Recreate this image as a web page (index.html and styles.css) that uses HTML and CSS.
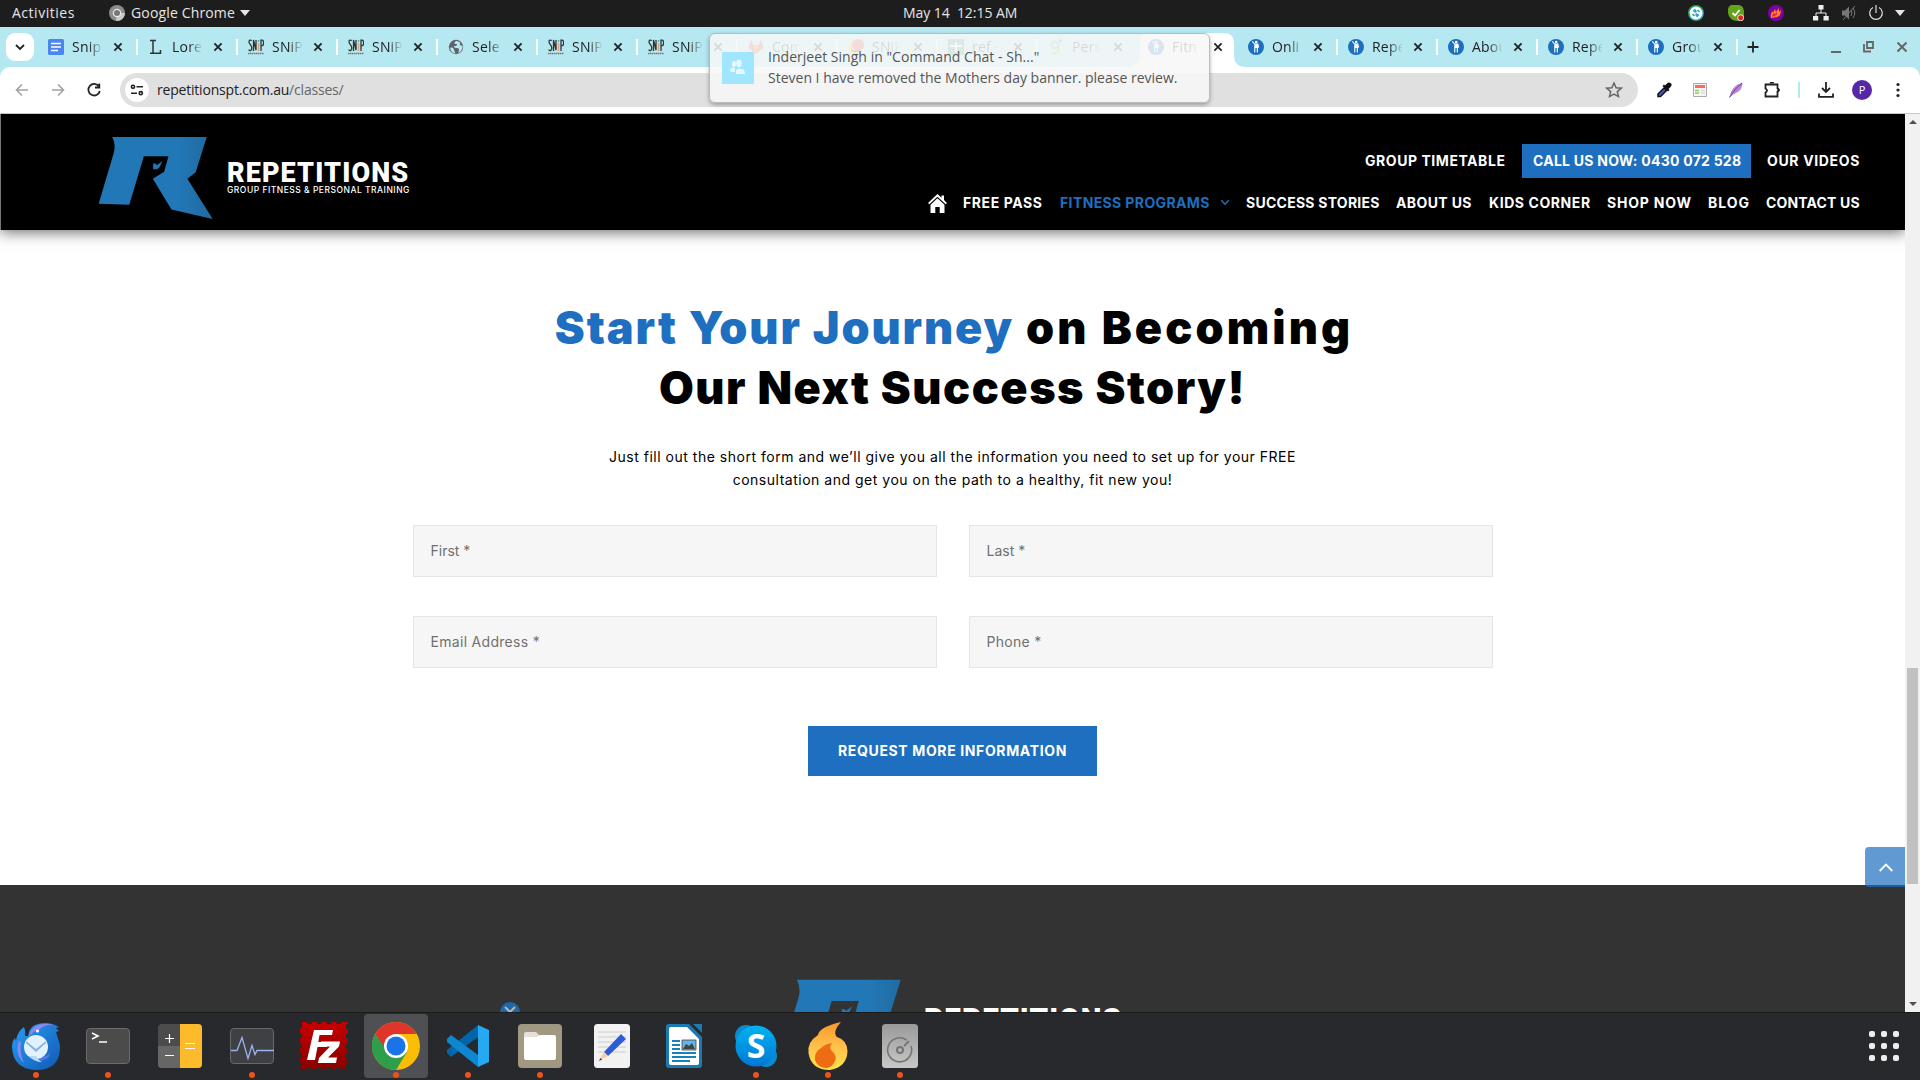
FILE: index.html
```html
<!DOCTYPE html>
<html lang="en">
<head>
<meta charset="utf-8">
<title>Fitness Programs - Repetitions</title>
<link rel="stylesheet" href="styles.css">
</head>
<body>
<svg class="defs" width="0" height="0">
  <defs>
    <linearGradient id="blueR"><stop offset="0.7" stop-color="#2277b6"/><stop offset="1" stop-color="#20699f"/></linearGradient>
    <linearGradient id="fzRed" x1="0" y1="0" x2="0" y2="1"><stop offset="0" stop-color="#c50000"/><stop offset="1" stop-color="#8a0000"/></linearGradient>
    <linearGradient id="bird" x1="0" y1="0" x2="1" y2="1"><stop offset="0" stop-color="#2a9df4"/><stop offset="1" stop-color="#1059b5"/></linearGradient>
    <linearGradient id="sky" x1="0" y1="0" x2="0" y2="1"><stop offset="0" stop-color="#00b3f0"/><stop offset="1" stop-color="#0078d7"/></linearGradient>
    <linearGradient id="flame" x1="0" y1="0" x2="0" y2="1"><stop offset="0" stop-color="#f9982c"/><stop offset=".5" stop-color="#ffc04a"/><stop offset="1" stop-color="#ffe24a"/></linearGradient>
    <linearGradient id="disk" x1="0" y1="0" x2="0" y2="1"><stop offset="0" stop-color="#9a9a9a"/><stop offset="1" stop-color="#c8c8c8"/></linearGradient>
  </defs>
  <symbol id="x" viewBox="0 0 10 10"><path d="M1.4 1.4 8.6 8.6M8.6 1.4 1.4 8.6" stroke="currentColor" stroke-width="1.8"/></symbol>
  <symbol id="f-doc" viewBox="0 0 16 16"><rect width="16" height="16" rx="1.5" fill="#4a86f0"/><path d="M3 4.5h10M3 8h10M3 11.5h7" stroke="#fff" stroke-width="1.7"/></symbol>
  <symbol id="f-l" viewBox="0 0 16 16"><path d="M2 1.500h6M2 14.300h10.500V11M5 1.500v13" stroke="#333" stroke-width="1.5" fill="none"/></symbol>
  <symbol id="f-snip" viewBox="0 0 16 16"><path d="M3.6 1.8C2.700 .6 1 1 1 3s2.800 3 2.800 6-2.300 3.300-3 1.500M5.500 12V1l2.500 10V1M13 12V1.200h1c2.200 0 2.200 5.500 0 5.500h-1" fill="none" stroke="#333" stroke-width="1.300"/><path d="M10.500 4v8" stroke="#e5a07a" stroke-width="1.400"/><path d="M10.500 1v2" stroke="#5cb0a0" stroke-width="1.400"/><path d="M0 14.500h16" stroke="#777" stroke-width="1.500" stroke-dasharray="1.500 .5"/></symbol>
  <symbol id="f-globe" viewBox="0 0 16 16"><circle cx="8" cy="8" r="7.200" fill="#5f6368"/><path d="M2 9c2-1 4 0 4 2l1.500 3.500Q3 14 2 9zM8 2c-2 1-2 3 0 3s1 2-1 2-1 2 2 2 2 3 1 5c3-1 5-4 4.500-7L12 6V3.500Q10 1.500 8 2z" fill="#b5e8f1"/></symbol>
  <symbol id="f-gitlab" viewBox="0 0 16 16"><path d="M8 15 .5 9 3 1l2.500 5h5L13 1l2.500 8z" fill="#e24329"/><path d="m8 15-3-9h6z" fill="#fc6d26"/></symbol>
  <symbol id="f-ball" viewBox="0 0 16 16"><circle cx="7" cy="9" r="6.500" fill="#f0b429"/><circle cx="10" cy="6" r="6" fill="#e5392c"/><path d="M3 11c3 2 6 2 8 0" stroke="#222" stroke-width="1.500" fill="none"/></symbol>
  <symbol id="f-sheet" viewBox="0 0 16 16"><rect width="16" height="16" rx="1.500" fill="#23a566"/><path d="M8 3v10M2 7h12" stroke="#fff" stroke-width="2"/></symbol>
  <symbol id="f-g" viewBox="0 0 16 16"><circle cx="7" cy="6" r="3.300" fill="none" stroke="#6fd66f" stroke-width="2.400"/><path d="M10.500 3v8c0 4-5 4.500-7 2" fill="none" stroke="#6fd66f" stroke-width="2.400"/><circle cx="12" cy="1.800" r="1.500" fill="#8a4ff0"/></symbol>
  <symbol id="f-rep" viewBox="0 0 16 16"><circle cx="8" cy="8" r="8" fill="#1c6fbd"/><path d="M4.300 2.300 6.600 5M6.600 5h3.200l.9 3.600M7 5.200 6.700 13.500M9.300 5.200v8.300" fill="none" stroke="#fff" stroke-width="1.100"/><path d="M6.800 5h2.800v4H6.600z" fill="#fff"/><circle cx="8.200" cy="3" r="1.300" fill="#fff"/></symbol>
  <symbol id="logo" viewBox="50 45 355 260"><path d="M96 50H380L347 156 322 176 398 297 274 268 218 176 252 155 265 108H191L147 254 55 251 100 100Q108 75 96 50Z" fill="url(#blueR)"/><path d="m219 130 8 1 3 4 17-13-9 19-7 6h-12z" fill="#2277b6"/></symbol>
</svg>

<header class="topbar">
  <span class="t-act">Activities</span>
  <svg class="t-chrome" width="16" height="16" viewBox="0 0 16 16"><circle cx="8" cy="8" r="8" fill="#8c8c8c"/><path d="M8 8h8a8 8 0 0 1-9 7.900z" fill="#c9c9c9"/><circle cx="8" cy="8" r="4.300" fill="#e8e8e8"/><circle cx="8" cy="8" r="3" fill="#777"/></svg>
  <span class="t-app">Google Chrome</span>
  <i class="caret"></i>
  <span class="clock">May 14&nbsp; 12:15 AM</span>
  <div class="tray">
    <svg width="16" height="16" viewBox="0 0 16 16"><circle cx="8" cy="8" r="8" fill="#2aa05c"/><path d="M1 11a8 8 0 0 0 14 0V5z" fill="#3fa9e8"/><circle cx="8" cy="8" r="6.400" fill="#fff"/><path d="m4.500 6 2.500-2.500 2 3-1.500 1.500zM11.500 10 9 12.500l-2-3L8.500 8z" fill="#2a9df4"/><path d="m4.500 9 2 2M9.500 5l2 2" stroke="#2aa05c" stroke-width="1.500"/></svg>
    <svg width="16" height="16" viewBox="0 0 16 16"><path d="M4 0h7q5 1 5 7v5q-2 4-7 4-8-1-9-8V4q1-4 4-4z" fill="#62a31a"/><path d="m4.500 8 2.500 2.500L11.500 5" fill="none" stroke="#fff" stroke-width="1.800"/><circle cx="12.700" cy="12.800" r="3" fill="#e02020" stroke="#fff" stroke-width=".8"/></svg>
    <svg width="16" height="16" viewBox="0 0 16 16"><circle cx="8" cy="8" r="8" fill="#8000a8"/><path d="M3 13q-1-5 2-7v2l2-4 1 3 3-4v4l2-2q0 6-4 7z" fill="#ff8a1e"/><path d="M4 12q0-3 2-4l1 1 2-2v3z" fill="#e8205a"/></svg>
    <svg class="t-net" width="16" height="16" viewBox="0 0 16 16"><path d="M8 4v4M3 11V8h10v3" stroke="#eee" fill="none"/><path d="M5.500 0h5v4.500h-5zM0 11h5.200v4.500H0zM10.500 11h5.200v4.500h-5.200z" fill="#eee"/></svg>
    <svg class="t-vol" width="16" height="16" viewBox="0 0 16 16"><path d="M1 5.500h3l4-4v13l-4-4H1z" fill="#777"/><path d="M10 5q2 3 0 6M12 3q3.500 5 0 10M2 15 14 1" fill="none" stroke="#777"/></svg>
    <svg class="t-pow" width="16" height="16" viewBox="0 0 16 16"><path d="M5 2.500a6.300 6.300 0 1 0 6 0M8 0v8" fill="none" stroke="#ddd" stroke-width="1.200"/></svg>
    <i class="caret t-last"></i>
  </div>
</header>

<nav class="tabs">
  <span class="tabmenu"><svg width="10" height="8" viewBox="0 0 10 8"><path d="m1 2 4 4 4-4" fill="none" stroke="#222" stroke-width="1.800"/></svg></span>
  <div class="tab"><svg class="fav"><use href="#f-doc"/></svg><span class="tt">Snip</span><svg class="cl"><use href="#x"/></svg></div>
  <div class="tab"><svg class="fav"><use href="#f-l"/></svg><span class="tt">Lore</span><svg class="cl"><use href="#x"/></svg></div>
  <div class="tab"><svg class="fav"><use href="#f-snip"/></svg><span class="tt">SNiP</span><svg class="cl"><use href="#x"/></svg></div>
  <div class="tab"><svg class="fav"><use href="#f-snip"/></svg><span class="tt">SNiP</span><svg class="cl"><use href="#x"/></svg></div>
  <div class="tab"><svg class="fav"><use href="#f-globe"/></svg><span class="tt">Sele</span><svg class="cl"><use href="#x"/></svg></div>
  <div class="tab"><svg class="fav"><use href="#f-snip"/></svg><span class="tt">SNiP</span><svg class="cl"><use href="#x"/></svg></div>
  <div class="tab"><svg class="fav"><use href="#f-snip"/></svg><span class="tt">SNiP</span><svg class="cl"><use href="#x"/></svg></div>
  <div class="tab"><svg class="fav"><use href="#f-gitlab"/></svg><span class="tt">Com</span><svg class="cl"><use href="#x"/></svg></div>
  <div class="tab"><svg class="fav"><use href="#f-ball"/></svg><span class="tt">SNiP</span><svg class="cl"><use href="#x"/></svg></div>
  <div class="tab"><svg class="fav"><use href="#f-sheet"/></svg><span class="tt">ref -</span><svg class="cl"><use href="#x"/></svg></div>
  <div class="tab nosep"><svg class="fav"><use href="#f-g"/></svg><span class="tt">Pers</span><svg class="cl"><use href="#x"/></svg></div>
  <div class="tab nosep active"><svg class="shape" width="118" height="34" viewBox="0 0 118 34"><path d="M0 34q12 0 12-12V10Q12 0 22 0H96q10 0 10 10V22q0 12 12 12z" fill="#fff"/></svg><svg class="fav"><use href="#f-rep"/></svg><span class="tt">Fitn</span><svg class="cl"><use href="#x"/></svg></div>
  <div class="tab"><svg class="fav"><use href="#f-rep"/></svg><span class="tt">Onli</span><svg class="cl"><use href="#x"/></svg></div>
  <div class="tab"><svg class="fav"><use href="#f-rep"/></svg><span class="tt">Repe</span><svg class="cl"><use href="#x"/></svg></div>
  <div class="tab"><svg class="fav"><use href="#f-rep"/></svg><span class="tt">Abou</span><svg class="cl"><use href="#x"/></svg></div>
  <div class="tab"><svg class="fav"><use href="#f-rep"/></svg><span class="tt">Repe</span><svg class="cl"><use href="#x"/></svg></div>
  <div class="tab"><svg class="fav"><use href="#f-rep"/></svg><span class="tt">Grou</span><svg class="cl"><use href="#x"/></svg></div>
  <svg class="plus" width="12" height="12" viewBox="0 0 12 12"><path d="M6 .5v11M.5 6h11" stroke="#222" stroke-width="1.800"/></svg>
  <div class="winctl">
    <svg width="12" height="12" viewBox="0 0 12 12"><path d="M1 11h10" stroke="#666" stroke-width="2"/></svg>
    <svg width="12" height="12" viewBox="0 0 12 12"><path d="M4 1h6v6H4zM1 3v7.500h7" fill="none" stroke="#666" stroke-width="1.800"/></svg>
    <svg width="12" height="12" viewBox="0 0 12 12"><path d="m1.500 1.500 9 9m0-9-9 9" stroke="#666" stroke-width="2"/></svg>
  </div>
</nav>

<div class="toolwrap"><div class="toolbar">
  <svg class="ic" viewBox="0 0 16 16"><path d="M14 8H3M8 2.500 2.500 8 8 13.500" fill="none" stroke="#a2a2a2" stroke-width="1.600"/></svg>
  <svg class="ic" viewBox="0 0 16 16"><path d="M2 8h11M8 2.500 13.500 8 8 13.500" fill="none" stroke="#a2a2a2" stroke-width="1.600"/></svg>
  <svg class="ic" viewBox="0 0 16 16"><path d="M13 4.500A5.800 5.800 0 1 0 13.800 9M13.300 1.500v4H9" fill="none" stroke="#222" stroke-width="1.800"/></svg>
  <div class="omni">
    <span class="site"><svg width="14" height="12" viewBox="0 0 14 12"><g fill="none" stroke="#222" stroke-width="1.600"><circle cx="3" cy="2.800" r="1.600"/><path d="M6.500 2.800H13M1 9.200h6"/><circle cx="10.800" cy="9.200" r="1.600"/></g></svg></span>
    <span class="url">repetitionspt.com.au<em>/classes/</em></span>
    <svg class="star" width="18" height="18" viewBox="0 0 18 18"><path d="m9 2 2.100 4.700 5.100.5-3.900 3.400 1.200 5L9 13l-4.500 2.600 1.200-5L1.800 7.200l5.100-.5z" fill="none" stroke="#666" stroke-width="1.500"/></svg>
  </div>
  <div class="exts">
    <svg class="ic" viewBox="0 0 16 16"><path d="M2 14.500V12l6-6 2.500 2.500-6 6z" fill="#4b56c9" stroke="#111" stroke-width="1.500"/><path d="m6.500 4 5.500 5.500 1.500-1.500-1-1L15 4.500Q16.500 2 14.500 1T11 1.500L9 3.500l-1-1z" fill="#111"/></svg>
    <svg class="ic" viewBox="0 0 16 16"><path d="M1.500 1.500h13v13h-13z" fill="#f6f6f6" stroke="#aaa"/><path d="M3 3h10v3H3z" fill="#f66"/><path d="M3 8.500h4M3 11h4" stroke="#8fce5a" stroke-width="1.500"/><path d="M9 8.500h4M9 11h4" stroke="#ddd" stroke-width="1.500"/></svg>
    <svg class="ic" viewBox="0 0 16 16"><path d="M1.500 15.500Q3 4 14.500.5 15 9 5 12.500z" fill="#b982d6"/><path d="M1.500 15.500Q6 7 14 1" stroke="#7a3a9c" fill="none"/></svg>
    <svg class="ic" viewBox="0 0 16 16"><path d="M1.500 2.500h12v4q2.500 1.500 0 3v5h-12v-4q3-2 0-4z" fill="none" stroke="#222" stroke-width="1.800"/><path d="M6 1.500a1.800 1.800 0 0 1 3.600 0M13.500 6.300a1.800 1.800 0 0 1 0 3.600" fill="#222" stroke="#222"/></svg>
    <i class="vsep"></i>
    <svg class="ic" viewBox="0 0 16 16"><path d="M8 0v9.500M4 6l4 4 4-4M1 11.500v3.300h14v-3.300" fill="none" stroke="#222" stroke-width="1.800"/></svg>
    <span class="avatar">P</span>
    <svg class="ic" viewBox="0 0 16 16"><g fill="#222"><circle cx="8" cy="2.500" r="1.600"/><circle cx="8" cy="8" r="1.600"/><circle cx="8" cy="13.500" r="1.600"/></g></svg>
  </div>
</div></div>

<div class="viewport">
  <main class="page">
    <div class="sitehead">
      <div class="brand">
        <svg class="mark"><use href="#logo"/></svg>
        <div class="words"><b>REPETITIONS</b><small>GROUP FITNESS &amp; PERSONAL TRAINING</small></div>
      </div>
      <div class="menus">
        <div class="menu first"><a class="n1">GROUP TIMETABLE</a><a class="call">CALL US NOW: 0430 072 528</a><a class="n2">OUR VIDEOS</a></div>
        <div class="menu">
          <svg class="home" width="19" height="19" viewBox="0 0 19 19"><path d="M9.500 0 0 9l1.300 1.300 8.200-7.600 8.200 7.600L19 9l-3-2.900V1.500h-2.500v2.300z" fill="#fff"/><path d="m9.500 4.300-7 6.500V19h4.800v-6h4.400v6h4.800v-8.200z" fill="#fff"/></svg>
          <a class="n3">FREE PASS</a><a class="n4 on">FITNESS PROGRAMS<svg width="10" height="7" viewBox="0 0 10 7"><path d="m1.200 1.200 3.800 4 3.800-4" fill="none" stroke="#1e6fbf" stroke-width="1.500"/></svg></a><a class="n5">SUCCESS STORIES</a><a class="n6">ABOUT US</a><a class="n7">KIDS CORNER</a><a class="n8">SHOP NOW</a><a class="n9">BLOG</a><a class="n10">CONTACT US</a>
        </div>
      </div>
    </div>
    <section class="signup">
      <h1><span class="h-a">Start Your Journey</span><span class="h-b">on Becoming</span><br><span class="h-c">Our Next Success Story!</span></h1>
      <p>Just fill out the short form and we’ll give you all the information you need to set up for your FREE<br>consultation and get you on the path to a healthy, fit new you!</p>
      <form class="fields">
        <div class="field short">First *</div><div class="field short">Last *</div>
        <div class="field">Email Address *</div><div class="field">Phone *</div>
      </form>
      <div class="submit">REQUEST MORE INFORMATION</div>
    </section>
    <footer class="foot">
      <svg class="bubble" width="20" height="20" viewBox="0 0 20 20"><circle cx="10" cy="10" r="10" fill="#2266a8"/><path d="m5 5 10 10M15 5 5 15" stroke="#b8b8b8" stroke-width="2"/></svg>
      <div class="brand big"><svg class="mark"><use href="#logo"/></svg><div class="words"><b>REPETITIONS</b></div></div>
    </footer>
    <div class="totop"><svg width="14" height="9" viewBox="0 0 14 9"><path d="m.7 8 6.300-6.500L13.300 8" fill="none" stroke="#fff" stroke-width="1.800"/></svg></div>
  </main>
  <div class="scroll"><i class="up"></i><i class="thumb"></i><i class="down"></i></div>
</div>

<div class="dock">
  <span class="app run"><svg viewBox="0 0 48 48"><path d="M23 3q10-4 20 0l4 2-3 1 3 3-3 1 4 13q1 25-24 25Q1 47 0 25q0-6 3-9l1 3q1-9 8-14 2 5 1 9l3 0Q17 6 23 3z" fill="url(#bird)"/><path d="M17 14Q20-1 42 2.500 31 2.500 27 8l-5 2z" fill="#8f86ee"/><path d="M7 19q-5 13 5 22Q7 31 9 20z" fill="#7f8cf5"/><path d="M25 39q12 0 13-8-4 4-9 4z" fill="#4a7be8"/><circle cx="24" cy="25" r="12" fill="#e2f1fe"/><path d="m14 19 10 8 10-8v2l-10 9-10-9z" fill="#86b4e0"/><path d="M17 34q5 6 13 6-4-2-6-6z" fill="#b8d8f5"/><circle cx="25.500" cy="9" r="1.500" fill="#fff"/></svg></span>
  <span class="app run"><svg viewBox="0 0 48 48"><rect x="2.500" y="6.500" width="43" height="35" rx="3.500" fill="#4b4b4b" stroke="#6b6b6b"/><path d="m8 11 6 3-6 3M15 20h8" fill="none" stroke="#fff" stroke-width="1.600"/></svg></span>
  <span class="app"><svg viewBox="0 0 48 48"><rect x="2" y="2" width="44" height="44" rx="4" fill="#4c4c4c"/><path d="M2 24h22v22H6q-4 0-4-4z" fill="#666"/><path d="M24 2h18q4 0 4 4v36q0 4-4 4H24z" fill="#fdbb2b"/><path d="M13.500 12v9M9 16.500h9M9 33.500h9M29 21.500h10M29 26.500h10" stroke="#fff" stroke-width="1.200"/></svg></span>
  <span class="app run"><svg viewBox="0 0 48 48"><rect x="2.500" y="6.500" width="43" height="35" rx="3.500" fill="#3f4043" stroke="#686868"/><path d="M3 28.500h6l5-13 6 21 4-13 3 9 2-4h17" fill="none" stroke="#9db0f0" stroke-width="1.300"/></svg></span>
  <span class="app"><svg viewBox="0 0 48 48"><rect x="2" y="2" width="44" height="44" fill="url(#fzRed)" stroke="url(#fzRed)" stroke-width="4" stroke-dasharray="5 4.800"/><path d="M14 8h19l-1 5H19.500l-1.200 7H28l-1 5h-9.500L15 38H7z" fill="#fff"/><path d="M21 19.500h19l-1 5-11 11h9l-1 5.500H18l1-5 11-11.500H20z" fill="#fff"/></svg></span>
  <span class="app run sel"><svg viewBox="0 0 48 48"><circle cx="24" cy="24" r="24" fill="#fbbc04"/><path d="M3.200 12A24 24 0 0 1 44.800 12H24l-10 18z" fill="#e0352b"/><path d="M3.200 12A24 24 0 0 0 24 48l11-18-20-1z" fill="#2e9e4a"/><circle cx="24" cy="24" r="12" fill="#fff"/><circle cx="24" cy="24" r="9.500" fill="#1a73e8"/></svg></span>
  <span class="app run"><svg viewBox="0 0 48 48"><path d="m34 3 11 5v32l-11 5z" fill="#24a9f2"/><path d="M34 3v12L7 35l-4-4v-3z" fill="#0065a9"/><path d="M34 45V33L7 13l-4 4v3z" fill="#0f86d0"/></svg></span>
  <span class="app run"><svg viewBox="0 0 48 48"><rect x="2" y="2" width="44" height="44" rx="4" fill="#a19882"/><path d="M8 12q0-2 2-2h10l4 4v5H8z" fill="#e6e1d8"/><path d="M8 17q0-2 2-2h11l3-2h14q2 0 2 2v21q0 2-2 2H10q-2 0-2-2z" fill="#fff"/></svg></span>
  <span class="app"><svg viewBox="0 0 48 48"><rect x="6" y="2" width="36" height="44" rx="3.500" fill="#f2f2f2"/><path d="M10 10h28M10 15h28M10 20h28M10 25h28M10 30h28" stroke="#ccc"/><path d="m16 30 17-18 5 5-18 17z" fill="#2b5bd7"/><path d="m16 30-5 9 9-5z" fill="#f5cfa8"/><path d="m12.500 36-1.500 3 3-1.500z" fill="#333"/></svg></span>
  <span class="app"><svg viewBox="0 0 48 48"><path d="M9 2h20l13 13v28q0 3-3 3H9q-3 0-3-3V5q0-3 3-3z" fill="#1c7ab0"/><path d="M33 2h9v9z" fill="#1c7ab0"/><path d="M11 5h16l12 12v24q0 2-2 2H11q-2 0-2-2V7q0-2 2-2z" fill="#fff"/><path d="M12 19h8M12 23h8M12 27h8M12 31h24M12 35h24M12 39h18" stroke="#1683bd" stroke-width="2"/><path d="M22 18h14v10H22z" fill="#62b5e6" stroke="#444" stroke-width=".8"/><path d="m23 27 3-5 3 2 3-3 3 6z" fill="#444"/></svg></span>
  <span class="app run"><svg viewBox="0 0 48 48"><circle cx="14" cy="14" r="11" fill="#0a8bcb"/><circle cx="34" cy="34" r="11" fill="#0a8bcb"/><circle cx="24" cy="24" r="20.500" fill="url(#sky)"/><text x="24" y="36" class="s">S</text></svg></span>
  <span class="app run"><svg viewBox="0 0 48 48"><path d="M37 0Q28 10 33 15 43 18 43.500 29 43 45 26 48 7 48 4.500 31 3 20 14 13 15 5 37 0z" fill="url(#flame)"/><path d="M28 21q-4 6 1 9 4 4 2 9-3 7-9 7-9-1-11-8-1-8 6-12 4-4 11-5z" fill="#ee6c14"/></svg></span>
  <span class="app run"><svg viewBox="0 0 48 48"><rect x="6" y="2" width="36" height="44" rx="3.500" fill="url(#disk)"/><path d="M30.500 18a12 12 0 1 0 4.500 6" fill="none" stroke="#757575" stroke-width="1.600"/><circle cx="24" cy="28" r="3" fill="none" stroke="#757575" stroke-width="2"/><path d="m28 24 5-5" stroke="#757575" stroke-width="1.800"/></svg></span>
  <div class="grid"><i></i><i></i><i></i><i></i><i></i><i></i><i></i><i></i><i></i></div>
</div>

<div class="toast">
  <span class="pic"><svg width="16" height="18" viewBox="0 0 16 18"><g fill="#fff" opacity=".75"><ellipse cx="4" cy="5" rx="2" ry="3"/><ellipse cx="9" cy="4.500" rx="2.800" ry="3.800"/><path d="M0 12q0-4 5-3-1 2 0 4H1zM6 15q-1-6 5-5 4 0 4 5z"/></g></svg></span>
  <div class="msg"><div class="m1">Inderjeet Singh in "Command Chat - Sh..."</div><div>Steven I have removed the Mothers day banner. please review.</div></div>
</div>
</body>
</html>
```

FILE: styles.css
```css
* { box-sizing: border-box; }
body { margin: 0; width: 1920px; height: 1080px; overflow: hidden; display: flex; flex-direction: column; position: relative; background: #fff; font-family: "Open Sans", sans-serif; font-size: 14px; }
svg { display: block; flex: none; }
.defs { position: absolute; }

/* desktop top bar */
.topbar { height: 27px; flex: none; background: #1d1d1d; color: #e6e6e6; display: flex; align-items: center; padding-left: 12px; position: relative; line-height: 26px; padding-bottom: 1px; }
.t-act { letter-spacing: .52px; width: 97px; }
.t-chrome { margin-right: 6px; }
.t-app { letter-spacing: .15px; width: 109px; }
.caret { border: 5px solid transparent; border-top: 6px solid #e6e6e6; border-bottom: 0; }
.clock { position: absolute; left: 903px; letter-spacing: -.05px; }
.tray { margin-left: auto; display: flex; align-items: center; padding-right: 15px; }
.tray svg { margin-right: 24px; }
.tray .t-net { margin: 0 12px 0 5px; }
.tray .t-vol { margin-right: 11px; }
.tray .t-pow { margin-right: 11px; }

/* tab strip */
.tabs { height: 40px; flex: none; background: #b5e8f1; display: flex; align-items: center; padding-left: 6px; }
.tabmenu { width: 28px; height: 28px; border-radius: 9px; background: #fff; margin-right: 4px; display: flex; align-items: center; justify-content: center; }
.tab { width: 100px; height: 40px; flex: none; display: flex; align-items: center; padding-left: 10px; color: #222; position: relative; }
.tab::after { content: ""; width: 2px; height: 16px; background: #fff; margin-left: auto; }
.tab.nosep::after { background: transparent; }
.fav { width: 16px; height: 16px; margin-right: 8px; }
.tt { width: 30px; overflow: hidden; white-space: nowrap; letter-spacing: .2px; padding-bottom: 2px; -webkit-mask-image: linear-gradient(90deg, #000 55%, rgba(0,0,0,.05)); mask-image: linear-gradient(90deg, #000 55%, rgba(0,0,0,.05)); }
.cl { width: 10px; height: 10px; margin-left: 11px; }
.shape { position: absolute; left: -10px; top: 6px; }
.active .fav, .active .tt, .active .cl { position: relative; }
.plus { margin-left: 9px; }
.winctl { margin-left: auto; padding-right: 12px; display: flex; gap: 21px; }

/* toolbar */
.toolwrap { flex: none; background: #b5e8f1; }
.toolbar { height: 47px; background: #fff; border-radius: 10px 10px 0 0; border-bottom: 1px solid #c8c8c8; display: flex; align-items: center; padding-left: 14px; }
.ic { width: 16px; height: 16px; margin-right: 20px; }
.toolbar > .ic:nth-child(3) { margin-right: 18px; }
.omni { width: 1518px; height: 34px; background: #e0e0e0; border-radius: 17px; display: flex; align-items: center; padding: 0 15px 0 5px; }
.site { width: 24px; height: 24px; border-radius: 50%; background: #fff; display: flex; align-items: center; justify-content: center; margin-right: 8px; }
.url { color: #222; letter-spacing: -.2px; padding-bottom: 1px; }
.url em { font-style: normal; color: #666; }
.star { margin-left: auto; }
.exts { display: flex; align-items: center; padding-left: 18px; }
.exts .ic:nth-child(4) { margin-right: 18px; }
.vsep { width: 2px; height: 16px; background: #b5e8f1; margin-right: 18px; }
.exts .vsep + .ic { margin-right: 18px; }
.avatar { width: 20px; height: 20px; border-radius: 50%; background: #5526a5; color: #fff; font-size: 11px; line-height: 20px; text-align: center; margin-right: 18px; }
.exts .ic:last-child { margin-right: 0; }

/* page */
.viewport { flex: 1; display: flex; min-height: 0; }
.page { width: 1905px; overflow: hidden; position: relative; font-family: Inter, sans-serif; }
.sitehead { height: 116px; background: #000; border-left: 1px solid #777; box-shadow: 0 2px 14px rgba(0,0,0,.6); display: flex; justify-content: space-between; position: relative; padding: 0 45px 0 96px; }
.brand { display: flex; }
.mark { width: 118px; height: 87px; margin-top: 21px; }
.words { color: #fff; display: flex; flex-direction: column; margin: 49px 0 0 12px; }
.words b { font: 900 27px/20px Roboto, sans-serif; letter-spacing: 1.1px; }
.words small { font-size: 8.500px; line-height: 11px; font-weight: 500; letter-spacing: .5px; margin-top: 2px; }
.menus { display: flex; flex-direction: column; align-items: flex-end; padding-top: 30px; gap: 8px; }
.menu { display: flex; align-items: center; gap: 16px; height: 34px; color: #fff; font-size: 14px; line-height: 17px; font-weight: 700; white-space: nowrap; }
.menu a { padding-bottom: 1px; }
.menu .call { background: #1e6fbf; width: 229px; height: 34px; line-height: 34px; padding: 0 0 0 11px; letter-spacing: .24px; }
.n1 { letter-spacing: .55px; width: 141px; }
.n2 { letter-spacing: .65px; width: 93px; }
.n3 { letter-spacing: .6px; width: 81px; }
.n4 { letter-spacing: .38px; display: flex; align-items: center; justify-content: space-between; width: 170px; }
.n5 { letter-spacing: .25px; width: 134px; }
.n6 { letter-spacing: .38px; width: 77px; }
.n7 { letter-spacing: .58px; width: 102px; }
.n8 { letter-spacing: .8px; width: 85px; }
.n9 { letter-spacing: .95px; width: 42px; }
.n10 { letter-spacing: .15px; width: 94px; }
.on { color: #1e6fbf; }

.signup { height: 655px; padding-top: 68px; display: flex; flex-direction: column; align-items: center; text-align: center; }
h1 { margin: 0 0 27px; font-size: 45px; line-height: 60px; font-weight: 900; color: #000; white-space: nowrap; }
.h-a { color: #1e6fbf; letter-spacing: 1.9px; margin-right: 12px; }
.h-b { letter-spacing: 3.1px; margin-right: -3px; }
.h-c { letter-spacing: 1.5px; }
.signup p { margin: 0 0 34px; line-height: 23px; font-weight: 400; letter-spacing: .51px; color: #000; }
.fields { width: 1080px; display: grid; grid-template-columns: 1fr 1fr; gap: 39px 32px; margin: 0 0 58px; }
.field { height: 52px; background: #f6f6f6; border: 1px solid #e5e5e5; padding-left: 17px; line-height: 50px; text-align: left; color: #707070; letter-spacing: .3px; }
.short { letter-spacing: 0; }
.submit { width: 289px; height: 50px; line-height: 50px; background: #1e6fbf; color: #fff; font-weight: 700; letter-spacing: .63px; }

.foot { height: 127px; background: #333; overflow: hidden; display: flex; }
.bubble { margin: 117px 0 0 500px; }
.big { margin-left: 260px; }
.big .mark { width: 130px; height: 95px; margin-top: 93px; }
.big .words { margin: 124px 0 0 14px; }
.big .words b { font-size: 29.5px; line-height: 21px; letter-spacing: 1.1px; }
.totop { position: absolute; right: 0; top: 733px; width: 40px; height: 40px; background: rgba(30,111,191,.7); border-radius: 4px 0 0 4px; display: flex; align-items: center; justify-content: center; padding-left: 2px; }

.scroll { width: 15px; background: #f1f1f1; display: flex; flex-direction: column; align-items: center; }
.scroll i { border: 4px solid transparent; }
.scroll .up { border-top: 0; border-bottom-color: #505050; margin-top: 6px; }
.scroll .thumb { border: 0; width: 11px; height: 216px; background: #c1c1c1; margin-top: 544px; }
.scroll .down { border-bottom: 0; border-top-color: #505050; margin: auto 0 6px; }

/* dock */
.dock { height: 68px; flex: none; background: #28292c; border-top: 1px solid #1b1b1b; display: flex; gap: 8px; padding: 1px 21px 0 4px; }
.app { width: 64px; height: 64px; padding: 8px; border-radius: 4px; position: relative; }
.app svg { width: 48px; height: 48px; }
.sel { background: #4e5053; }
.run::after { content: ""; position: absolute; left: 29px; top: 58px; width: 6px; height: 6px; border-radius: 50%; background: #e95420; }
.s { font: bold 34px "Open Sans", sans-serif; fill: #fff; text-anchor: middle; }
.grid { margin: 17px 0 0 auto; display: grid; grid-template-columns: repeat(3, 6px); grid-auto-rows: 6px; gap: 6px; }
.grid i { background: #eee; border-radius: 2px; }

/* notification */
.toast { position: absolute; left: 709px; top: 33px; width: 501px; height: 70px; border: 1px solid #bbb; border-radius: 6px; background: rgba(247,247,247,.86); box-shadow: 0 2px 4px rgba(0,0,0,.3); display: flex; padding: 18px 0 0 12px; }
.pic { width: 32px; height: 32px; background: #a0e6ff; display: flex; align-items: center; justify-content: center; margin-right: 14px; }
.msg { color: #555; line-height: 21px; margin-top: -6px; white-space: nowrap; }
.m1 { letter-spacing: .03px; }
```
